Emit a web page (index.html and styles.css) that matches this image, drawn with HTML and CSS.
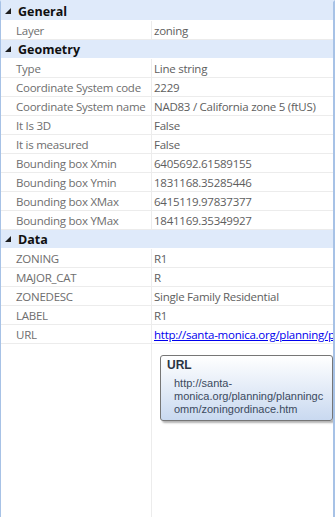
FILE: index.html
```html
<!DOCTYPE html>
<html>
<head>
<meta charset="utf-8">
<link rel="stylesheet" href="styles.css">
</head>
<body>
<div class="grid">
  <div class="hdr"><svg class="tri" width="7" height="7" viewBox="0 0 7 7"><polygon points="6,0 6,6 0,6" fill="#1e1e1e"/></svg><span>General</span></div>
  <div class="row"><div class="k">Layer</div><div class="v">zoning</div></div>
  <div class="hdr"><svg class="tri" width="7" height="7" viewBox="0 0 7 7"><polygon points="6,0 6,6 0,6" fill="#1e1e1e"/></svg><span>Geometry</span></div>
  <div class="row"><div class="k">Type</div><div class="v">Line string</div></div>
  <div class="row"><div class="k">Coordinate System code</div><div class="v">2229</div></div>
  <div class="row"><div class="k">Coordinate System name</div><div class="v">NAD83 / California zone 5 (ftUS)</div></div>
  <div class="row"><div class="k">It Is 3D</div><div class="v">False</div></div>
  <div class="row"><div class="k">It is measured</div><div class="v">False</div></div>
  <div class="row"><div class="k">Bounding box Xmin</div><div class="v">6405692.61589155</div></div>
  <div class="row"><div class="k">Bounding box Ymin</div><div class="v">1831168.35285446</div></div>
  <div class="row"><div class="k">Bounding box XMax</div><div class="v">6415119.97837377</div></div>
  <div class="row"><div class="k">Bounding box YMax</div><div class="v">1841169.35349927</div></div>
  <div class="hdr"><svg class="tri" width="7" height="7" viewBox="0 0 7 7"><polygon points="6,0 6,6 0,6" fill="#1e1e1e"/></svg><span>Data</span></div>
  <div class="row"><div class="k">ZONING</div><div class="v">R1</div></div>
  <div class="row"><div class="k">MAJOR_CAT</div><div class="v">R</div></div>
  <div class="row"><div class="k">ZONEDESC</div><div class="v">Single Family Residential</div></div>
  <div class="row"><div class="k">LABEL</div><div class="v">R1</div></div>
  <div class="row"><div class="k">URL</div><div class="v"><a class="link">http://santa-monica.org/planning/planningcomm/zoningordinace.htm</a></div></div>
  <div class="rest"><div class="k"></div><div class="v"></div></div>
  <div class="tip">
    <div class="tip-title">URL</div>
    <div class="tip-body">http://santa-<br>monica.org/planning/planningc<br>omm/zoningordinace.htm</div>
  </div>
</div>
</body>
</html>
```
FILE: styles.css
```css
html, body {
  margin: 0;
  padding: 0;
  height: 100%;
  background: #ffffff;
}
.grid {
  position: relative;
  box-sizing: border-box;
  height: 517px;
  border-left: 1px solid #a7c2e6;
  border-right: 2px solid #a7c2e6;
  border-top: 2px solid #dfeafa;
  display: flex;
  flex-direction: column;
  font-family: "Open Sans", "Noto Sans", sans-serif;
  font-size: 11.5px;
  letter-spacing: -0.25px;
  overflow: hidden;
}
.hdr {
  height: 18px;
  border-bottom: 1px solid #ffffff;
  background: #dfeafa;
  display: flex;
  align-items: center;
  font-weight: bold;
  font-size: 12.5px;
  letter-spacing: 0;
  color: #101010;
  flex: none;
}
.tri {
  margin: 0 6px 0 4px;
  flex: none;
}
.row {
  height: 18px;
  border-bottom: 1px solid #ececec;
  display: flex;
  flex: none;
}
.k {
  width: 135px;
  padding-left: 15px;
  border-right: 1px solid #ececec;
  color: #6e6e6e;
  line-height: 19px;
  white-space: nowrap;
  overflow: hidden;
  flex: none;
}
.v {
  flex: 1;
  min-width: 0;
  padding-left: 2px;
  color: #5e5e5e;
  line-height: 19px;
  white-space: nowrap;
  overflow: hidden;
}
.link {
  color: #0000ee;
  text-decoration: underline;
}
.rest {
  flex: 1;
  display: flex;
}
.tip {
  position: absolute;
  left: 159px;
  top: 353px;
  width: 160px;
  height: 59px;
  padding: 2px 5px 3px 6px;
  border: 1px solid #767676;
  border-radius: 3px;
  background: linear-gradient(#ffffff, #c9d9f0);
  box-shadow: 2px 2px 2px rgba(0, 0, 0, 0.3);
  font-family: "Liberation Sans", Arial, sans-serif;
  font-size: 11px;
  letter-spacing: 0;
  color: #3b4a5e;
}
.tip-title {
  font-weight: bold;
  font-size: 12px;
  color: #2a3444;
  line-height: 14px;
}
.tip-body {
  margin-top: 5px;
  padding-left: 7px;
  line-height: 13px;
}
```
